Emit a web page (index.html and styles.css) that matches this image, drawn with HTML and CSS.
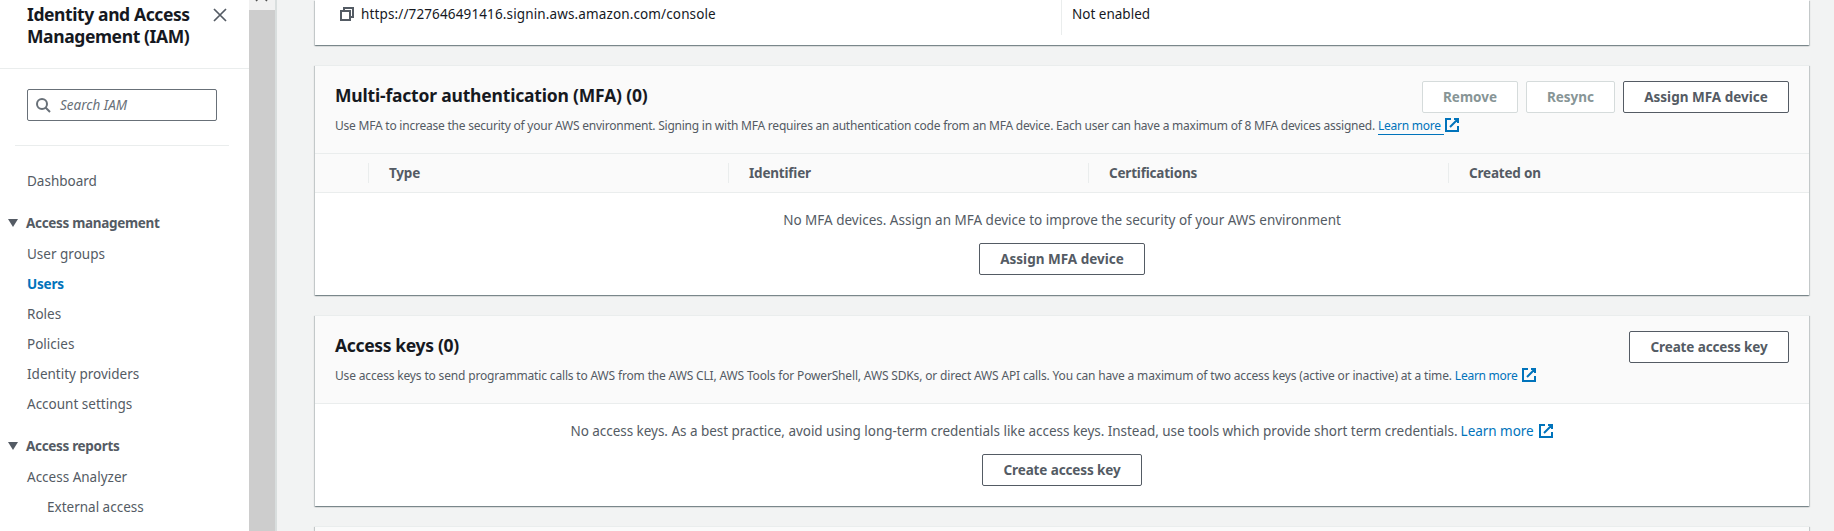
FILE: index.html
```html
<!DOCTYPE html>
<html lang="en">
<head>
<meta charset="utf-8">
<title>IAM user security credentials</title>
<link rel="stylesheet" href="styles.css">
</head>
<body>
<svg class="defs" aria-hidden="true">
  <symbol id="external" viewBox="0 0 16 16"><path d="M10 2h4v4M6 10l8-8M14 9.05V14H2V2h5"/></symbol>
  <symbol id="copy" viewBox="0 0 16 16"><path d="M2 5h9v9H2zM5 5V2h9v9h-3"/></symbol>
  <symbol id="search" viewBox="0 0 16 16"><circle cx="7" cy="7" r="5"/><path d="m15 15-4.5-4.5"/></symbol>
  <symbol id="close" viewBox="0 0 16 16"><path d="m2 2 12 12M14 2 2 14"/></symbol>
</svg>
<div class="layout">
  <aside class="sidebar">
    <header class="side-head">
      <h2>Identity and Access<br>Management (IAM)</h2>
      <svg class="icon close"><use href="#close"/></svg>
    </header>
    <div class="search"><svg class="icon"><use href="#search"/></svg><span>Search IAM</span></div>
    <hr>
    <nav>
      <a>Dashboard</a>
      <h3><i class="caret"></i>Access management</h3>
      <a>User groups</a>
      <a class="active">Users</a>
      <a>Roles</a>
      <a>Policies</a>
      <a>Identity providers</a>
      <a>Account settings</a>
      <h3><i class="caret"></i>Access reports</h3>
      <a>Access Analyzer</a>
      <a class="nested">External access</a>
    </nav>
  </aside>
  <div class="scrollbar"><div class="scroll-button"><svg viewBox="0 0 26 10"><path d="M7 1l2-2M18 1l-2-2"/></svg></div></div>
  <main>
    <section class="card summary">
      <div class="cell url"><svg class="icon"><use href="#copy"/></svg><span>https://727646491416.signin.aws.amazon.com/console</span></div>
      <div class="cell status">Not enabled</div>
    </section>

    <section class="card">
      <header class="card-head">
        <div class="heading">
          <h1>Multi-factor authentication (MFA) (0)</h1>
          <p class="desc"><span>Use MFA to increase the security of your AWS environment. Signing in with MFA requires an authentication code from an MFA device. Each user can have a maximum of 8 MFA devices assigned.</span><a class="link underlined">Learn more</a><svg class="icon link-icon"><use href="#external"/></svg></p>
        </div>
        <div class="actions">
          <button class="remove" disabled>Remove</button>
          <button class="resync" disabled>Resync</button>
          <button class="assign">Assign MFA device</button>
        </div>
      </header>
      <div class="columns">
        <div></div><div>Type</div><div>Identifier</div><div>Certifications</div><div>Created on</div>
      </div>
      <div class="empty">
        <p>No MFA devices. Assign an MFA device to improve the security of your AWS environment</p>
        <button class="assign">Assign MFA device</button>
      </div>
    </section>

    <section class="card">
      <header class="card-head">
        <div class="heading">
          <h1 class="keys-title">Access keys (0)</h1>
          <p class="desc keys-desc"><span>Use access keys to send programmatic calls to AWS from the AWS CLI, AWS Tools for PowerShell, AWS SDKs, or direct AWS API calls. You can have a maximum of two access keys (active or inactive) at a time.</span><a class="link">Learn more</a><svg class="icon link-icon"><use href="#external"/></svg></p>
        </div>
        <div class="actions"><button class="create">Create access key</button></div>
      </header>
      <div class="empty">
        <p class="keys-empty"><span>No access keys. As a best practice, avoid using long-term credentials like access keys. Instead, use tools which provide short term credentials.</span><a class="link">Learn more</a><svg class="icon link-icon"><use href="#external"/></svg></p>
        <button class="create">Create access key</button>
      </div>
    </section>

    <section class="card next"></section>
  </main>
</div>
</body>
</html>
```
FILE: styles.css
```css
* { box-sizing: border-box; }
body {
  margin: 0;
  overflow: hidden;
  font: 13.5px/20px "Noto Sans", "Open Sans", sans-serif;
  color: #545b64;
  background: #f2f3f3;
}
h1, h2, h3, p { margin: 0; }
.defs { display: none; }
.icon {
  display: block;
  flex: none;
  width: 16px;
  height: 16px;
  fill: none;
  stroke: #545b64;
  stroke-width: 2;
}
.layout { display: flex; height: 531px; overflow: hidden; }

/* Sidebar */
.sidebar { width: 249px; flex: none; background: #fff; }
.side-head {
  display: flex;
  justify-content: space-between;
  height: 69px;
  padding: 3px 21px 0 27px;
  border-bottom: 1px solid #eaeded;
}
.side-head h2 {
  font-size: 17.5px;
  line-height: 22px;
  letter-spacing: -.4px;
  color: #16191f;
  white-space: nowrap;
}
.close { margin-top: 4px; stroke-width: 1.7; }
.search {
  display: flex;
  align-items: center;
  gap: 9px;
  width: 190px;
  height: 32px;
  margin: 20px 0 0 27px;
  padding-left: 7px;
  border: 1px solid #687078;
  border-radius: 2px;
  font-size: 13.5px;
  font-style: italic;
  color: #687078;
}
.search .icon { stroke: #687078; }
hr { width: 214px; height: 1px; margin: 24px 0 20px 15px; border: 0; background: #eaeded; }
nav a, nav h3 { display: block; line-height: 30px; height: 30px; }
nav a { padding-left: 27px; }
nav h3 {
  display: flex;
  align-items: center;
  gap: 8px;
  margin: 12px 0 1px;
  padding-left: 8px;
  font-size: 13.5px;
  letter-spacing: -.32px;
}
nav .active { font-weight: 700; letter-spacing: -.2px; color: #0073bb; }
nav .nested { padding-left: 47px; }
.caret {
  border: 5px solid transparent;
  border-top: 8px solid #545b64;
  border-bottom: 0;
}

.scrollbar { flex: none; width: 28px; background: #cdcdcd; border-right: 2px solid #d9dede; }
.scroll-button { height: 10px; background: #f1f1f1; }
.scroll-button svg { display: block; width: 26px; height: 10px; stroke: #505050; stroke-width: 1.5; }

/* Cards */
main { flex: 1; display: flex; flex-direction: column; gap: 20px; padding: 0 25px 0 38px; }
.card {
  flex: none;
  background: #fff;
  border-top: 1px solid #eaeded;
  box-shadow: 0 1px 1px rgba(0, 28, 36, .3), 1px 1px 1px rgba(0, 28, 36, .15), -1px 1px 1px rgba(0, 28, 36, .15);
}
.summary { display: flex; height: 45px; border: 0; color: #16191f; }
.cell { height: 35px; padding-top: 4px; }
.url { display: flex; gap: 6px; width: 746px; padding-left: 24px; letter-spacing: .13px; }
.url .icon { margin-top: 2px; }
.status { border-left: 1px solid #eaeded; padding-left: 10px; }
.card-head {
  display: flex;
  justify-content: space-between;
  height: 88px;
  background: #fafafa;
  border-bottom: 1px solid #eaeded;
}
.heading { padding: 18px 0 0 20px; }
h1 { font-size: 17.5px; line-height: 22px; letter-spacing: -.19px; color: #16191f; }
.keys-title { letter-spacing: -.34px; }
.desc { display: flex; width: 1060px; margin-top: 10px; font-size: 12px; letter-spacing: -.224px; white-space: nowrap; }
.keys-desc { letter-spacing: -.162px; }
.link { flex: none; margin-left: 3px; color: #0073bb; }
.desc .link { width: 66px; letter-spacing: -.25px; }
.underlined { border-bottom: 1px solid #0073bb; height: 19px; }
.link-icon { stroke: #0073bb; margin-top: 1px; }
.actions { display: flex; gap: 8px; padding: 15px 20px 0 0; }
button {
  height: 32px;
  padding: 0;
  border: 1px solid #545b64;
  border-radius: 2px;
  background: #fff;
  font: 700 13.5px/20px "Noto Sans", "Open Sans", sans-serif;
  letter-spacing: 0;
  color: #545b64;
}
button:disabled { border-color: #d5dbdb; color: #879596; }
.remove { width: 96px; }
.resync { width: 89px; }
.assign { width: 166px; }
.create { width: 160px; letter-spacing: -.12px; }
.columns {
  display: grid;
  grid-template-columns: 53px 360px 360px 360px 1fr;
  align-items: center;
  height: 39px;
  background: #fafafa;
  border-bottom: 1px solid #eaeded;
  font-size: 13.5px;
  letter-spacing: -.2px;
  font-weight: 700;
}
.columns div { height: 20px; padding-left: 20px; }
.columns div + div { border-left: 1px solid #eaeded; }
.empty {
  display: flex;
  flex-direction: column;
  align-items: center;
  gap: 13px;
  height: 102px;
  padding-top: 17px;
}
.keys-empty { display: flex; letter-spacing: -.035px; white-space: nowrap; }
.keys-empty .link { width: 77px; }
.keys-empty .link-icon { margin-top: 2px; }
.next { height: 60px; background: #fafafa; }
```
